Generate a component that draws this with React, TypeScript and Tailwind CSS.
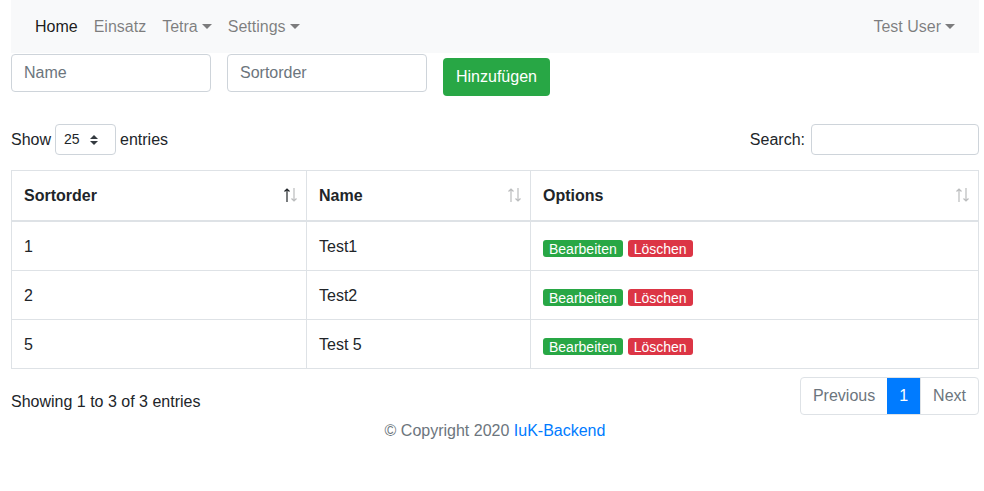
import { ReactNode } from "react";

const rows = [
  { sort: "1", name: "Test1" },
  { sort: "2", name: "Test2" },
  { sort: "5", name: "Test 5" },
];

function Caret() {
  return (
    <span className="ml-[4px] inline-block h-0 w-0 border-x-[5px] border-t-[5px] border-x-transparent border-t-current align-[3px]" />
  );
}

function SortIcons({ active }: { active?: boolean }) {
  return (
    <span className="absolute right-[9px] top-[17px] flex gap-[1px] text-[#212529]">
      <svg width="6" height="14" viewBox="0 0 6 14" className={active ? "opacity-100" : "opacity-30"}>
        <path d="M3 1 V14 M0.5 3.5 L3 1 L5.5 3.5" stroke="currentColor" strokeWidth="1.2" fill="none" />
      </svg>
      <svg width="6" height="14" viewBox="0 0 6 14" className="opacity-30">
        <path d="M3 0 V13 M0.5 10.5 L3 13 L5.5 10.5" stroke="currentColor" strokeWidth="1.2" fill="none" />
      </svg>
    </span>
  );
}

function Th({ children, width, active }: { children: ReactNode; width: string; active?: boolean }) {
  return (
    <th
      className={`relative border border-b-2 border-[#dee2e6] px-3 pb-3 pt-[13px] text-left align-bottom font-bold ${width}`}
    >
      {children}
      <SortIcons active={active} />
    </th>
  );
}

function Td({ children }: { children: ReactNode }) {
  return <td className="border border-[#dee2e6] px-3 pb-[11px] pt-[13px] align-top">{children}</td>;
}

function Badge({ children, color }: { children: ReactNode; color: string }) {
  return (
    <span
      className={`inline-flex h-[17px] items-center rounded-[3px] px-[6px] text-[14px] leading-none text-white ${color}`}
    >
      {children}
    </span>
  );
}

export default function App() {
  return (
    <div className="min-h-screen bg-white pl-[11px] pr-[5px] font-['Liberation_Sans',Arial,sans-serif] text-[16px] text-[#212529]">
      {/* Navbar */}
      <nav className="flex h-[53px] items-center justify-between bg-[#f8f9fa] px-4">
        <div className="flex items-center">
          <a className="px-2 text-black/90">Home</a>
          <a className="px-2 text-black/50">Einsatz</a>
          <a className="px-2 text-black/50">
            Tetra
            <Caret />
          </a>
          <a className="px-2 text-black/50">
            Settings
            <Caret />
          </a>
        </div>
        <a className="px-2 text-black/50">
          Test User
          <Caret />
        </a>
      </nav>

      {/* Add form */}
      <div className="mt-px flex items-start gap-4">
        <input
          placeholder="Name"
          className="h-[38px] w-[200px] rounded border border-[#ced4da] px-3 placeholder:text-[#6c757d]"
        />
        <input
          placeholder="Sortorder"
          className="h-[38px] w-[200px] rounded border border-[#ced4da] px-3 placeholder:text-[#6c757d]"
        />
        <button className="mt-1 h-[38px] rounded bg-[#28a745] px-[13px] text-white">Hinzufügen</button>
      </div>

      {/* Length + search */}
      <div className="mt-[28px] flex items-center justify-between">
        <label className="flex items-center">
          Show
          <span className="ml-[4px] mr-[4px] flex h-[31px] w-[61px] items-center justify-between rounded border border-[#ced4da] pl-2 pr-[17px] text-[14px]">
            25
            <svg width="8" height="10" viewBox="0 0 8 10" className="text-[#343a40]">
              <path d="M4 0 L8 4 H0 Z M4 10 L0 6 H8 Z" fill="currentColor" />
            </svg>
          </span>
          entries
        </label>
        <label className="flex items-center">
          Search:
          <span className="ml-[6px] h-[31px] w-[168px] rounded border border-[#ced4da]" />
        </label>
      </div>

      {/* Table */}
      <table className="mt-[15px] w-full border-collapse">
        <thead>
          <tr>
            <Th width="w-[295px]" active>
              Sortorder
            </Th>
            <Th width="w-[224px]">Name</Th>
            <Th width="">Options</Th>
          </tr>
        </thead>
        <tbody>
          {rows.map((r) => (
            <tr key={r.sort}>
              <Td>{r.sort}</Td>
              <Td>{r.name}</Td>
              <Td>
                <div className="flex gap-[5px] pt-[5px]">
                  <Badge color="bg-[#28a745]">Bearbeiten</Badge>
                  <Badge color="bg-[#dc3545]">Löschen</Badge>
                </div>
              </Td>
            </tr>
          ))}
        </tbody>
      </table>

      {/* Info + pagination */}
      <div className="mt-[8px] flex items-start justify-between">
        <div className="pt-[13px]">Showing 1 to 3 of 3 entries</div>
        <div className="flex h-[38px] rounded border border-[#dee2e6]">
          <span className="flex items-center px-3 text-[#6c757d]">Previous</span>
          <span className="flex items-center bg-[#007bff] px-3 text-white">1</span>
          <span className="flex items-center border-l border-[#dee2e6] px-3 text-[#6c757d]">Next</span>
        </div>
      </div>

      {/* Footer */}
      <div className="mt-[4px] text-center text-[#6c757d]">
        © Copyright 2020 <a className="text-[#007bff]">IuK-Backend</a>
      </div>
    </div>
  );
}
